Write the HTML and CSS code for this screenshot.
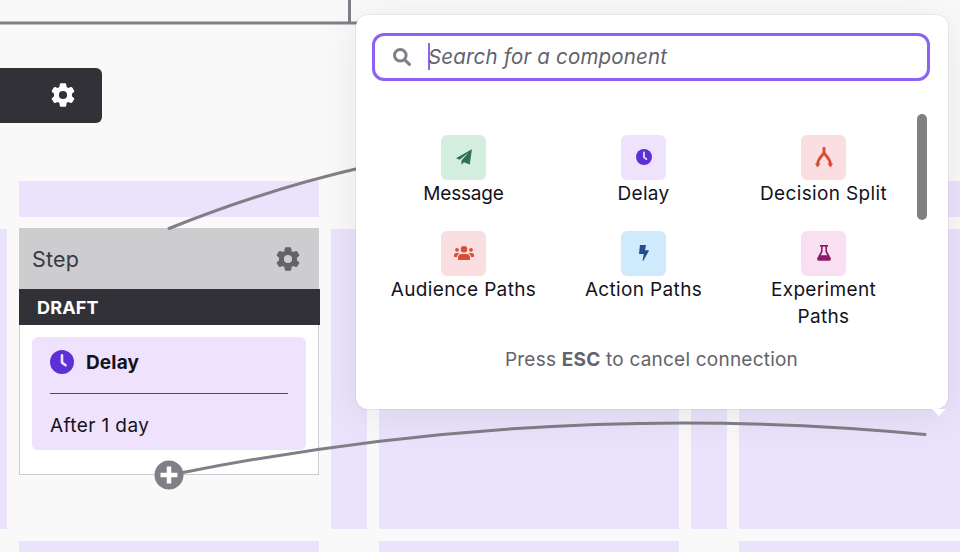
FILE: index.html
```html
<!DOCTYPE html>
<html lang="en">
<head>
<meta charset="utf-8">
<title>Canvas</title>
<link rel="stylesheet" href="styles.css">
</head>
<body>
<svg class="defs" width="0" height="0">
  <symbol id="gear" viewBox="0 0 24 24"><path fill-rule="evenodd" d="M8.8 1.200Q8.900 0.300 9.800 0.300H14.200Q15.100 0.300 15.200 1.200L15.600 3.900Q16.400 4.200 17.200 4.900L19.800 4.100Q20.800 3.800 21.400 4.800L23.200 7.800Q23.600 8.500 22.900 9.100L20.900 10.700Q21.100 12 20.900 13.300L22.900 14.900Q23.600 15.500 23.200 16.200L21.400 19.200Q20.800 20.200 19.800 19.900L17.200 19.100Q16.400 19.800 15.600 20.100L15.200 22.800Q15.100 23.700 14.200 23.700H9.800Q8.900 23.700 8.800 22.800L8.400 20.100Q7.600 19.800 6.800 19.100L4.200 19.900Q3.200 20.200 2.600 19.200L.8 16.200Q.4 15.500 1.100 14.900L3.100 13.300Q2.900 12 3.100 10.700L1.100 9.100Q.4 8.500 .8 7.800L2.600 4.800Q3.200 3.800 4.200 4.100L6.800 4.900Q7.600 4.200 8.400 3.900ZM12 7.900a4.100 4.100 0 1 0 0 8.200a4.100 4.100 0 0 0 0-8.200Z"/></symbol>
  <symbol id="clock" viewBox="0 0 24 24"><circle cx="12" cy="12" r="12"/><path class="hand" d="M12 5.200v7.400l3.600 2.600"/></symbol>
</svg>
<main class="canvas">
  <div class="zones">
    <div class="zone top c2"></div><div class="zone top c4"></div><div class="zone top c6"></div>
    <div class="zone mid c1"></div>
    <section class="card">
      <header class="card-head"><span>Step</span><svg class="gear"><use href="#gear"/></svg></header>
      <div class="status">DRAFT</div>
      <div class="card-body">
        <div class="component">
          <div class="component-title"><svg class="clock"><use href="#clock"/></svg><span>Delay</span></div>
          <hr>
          <div class="detail">After 1 day</div>
        </div>
      </div>
    </section>
    <div class="zone mid c3"></div><div class="zone mid c4"></div><div class="zone mid c5"></div><div class="zone mid c6"></div>
    <div class="zone low c2"></div><div class="zone low c4"></div><div class="zone low c6"></div>
  </div>
  <div class="node"><svg class="gear"><use href="#gear"/></svg></div>
  <svg class="links" viewBox="0 0 960 552">
    <path d="M0 23H360M349.500 0V23"/>
    <path d="M169 228.500Q268 189 362 167.500"/>
    <path d="M183 472.500Q554 399 925 434.500"/>
    <circle cx="169" cy="475" r="14.500"/>
    <path class="plus" d="M169 466.500v17M160.500 475h17"/>
  </svg>
  <aside class="popover">
    <div class="search">
      <svg viewBox="0 0 18 18"><circle cx="7.300" cy="7.300" r="5.800"/><path d="M11.600 11.600L16.400 16.400"/></svg>
      <span class="caret"></span><span class="placeholder">Search for a component</span>
    </div>
    <div class="results">
      <div class="options">
        <div class="option"><div class="tile green"><svg viewBox="0 0 16 16"><path d="M15.900 .2L0 9.200L3.700 10.700L12.600 3.500L5.500 11.600V15.800L8 13.200L13.800 15.400Z"/></svg></div><span>Message</span></div>
        <div class="option"><div class="tile violet"><svg><use href="#clock"/></svg></div><span>Delay</span></div>
        <div class="option"><div class="tile red"><svg class="split" viewBox="0 0 18 21"><path class="line" d="M9 0V6.500M9 5.500C8 9 3 10.500 2.700 17M9 5.500C10 9 15 10.500 15.300 17"/><path d="M0 16.500H5.500L2.500 20.500ZM12.500 16.500H18L15.500 20.500Z"/></svg></div><span>Decision Split</span></div>
        <div class="option"><div class="tile red"><svg class="people" viewBox="0 0 20 16"><circle cx="10" cy="4.200" r="3.300"/><circle cx="3" cy="4.800" r="1.900"/><circle cx="17" cy="4.800" r="1.900"/><path d="M4 15V12.500Q4 9 7.500 9H12.500Q16 9 16 12.500V15ZM0 12V10Q0 7.900 2.300 7.900H4Q5 7.900 5.300 8.300Q3.300 9.500 3 12ZM20 12V10Q20 7.900 17.700 7.900H16Q15 7.900 14.700 8.300Q16.700 9.500 17 12Z"/></svg></div><span>Audience Paths</span></div>
        <div class="option"><div class="tile blue"><svg class="bolt" viewBox="0 0 10 16"><path d="M1 0H7L6 5.200H9.600Q10 5.400 9.800 6L4.300 15.800H3.500L4.800 9H.3Q0 8.900 0 8.500Z"/></svg></div><span>Action Paths</span></div>
        <div class="option"><div class="tile pink"><svg class="flask" viewBox="0 0 14 16"><path fill-rule="evenodd" d="M3 0H11V1.800H10V6.200L13.700 13Q14.600 15.800 12.200 15.800H1.800Q-.6 15.800 .3 13L4 6.200V1.800H3ZM5.600 1.800V6.800L3.800 10.200H10.200L8.400 6.800V1.800Z"/></svg></div><span>Experiment Paths</span></div>
      </div>
      <div class="scrollbar"></div>
    </div>
    <p class="hint">Press <b>ESC</b> to cancel connection</p>
  </aside>
</main>
</body>
</html>
```
FILE: styles.css
```css
* { box-sizing: border-box; }
body { margin: 0; font-family: Inter, "Noto Sans", sans-serif; font-size: 19px; line-height: 27px; color: #14121c; }
.defs { position: absolute; }
.canvas { position: relative; width: 960px; height: 552px; overflow: hidden; background: #f9f9f9; }
.zones { display: grid; grid-template-columns: 7px 300px 36px 300px 36px 300px; grid-template-rows: 36px 300px 60px; gap: 12px; padding-top: 180.500px; }
.zone { background: #ebe3fc; }
.c1 { grid-column: 1; } .c2 { grid-column: 2; } .c3 { grid-column: 3; } .c4 { grid-column: 4; } .c5 { grid-column: 5; } .c6 { grid-column: 6; }
.top { grid-row: 1; } .mid { grid-row: 2; } .low { grid-row: 3; }
.node { position: absolute; left: -198px; top: 68px; width: 300px; height: 55px; border-radius: 6px; background: #333138; color: #fff; display: flex; align-items: center; justify-content: flex-end; padding: 0 27px 1px 0; }
.gear { width: 24px; height: 24px; fill: currentColor; }
.card { grid-column: 2; grid-row: 2; align-self: start; height: 247px; margin-top: -.5px; background: #fff; border: 1px solid #cdcccf; border-top: 0; }
.card-head { height: 61px; margin: 0 -1px; padding: 1px 19px 0 13px; background: #cdcccf; color: #3a393f; display: flex; align-items: center; justify-content: space-between; font-size: 21.500px; letter-spacing: .2px; }
.card-head .gear { color: #64626a; }
.status { height: 36px; margin: 0 -2px 0 -1px; padding-left: 18px; background: #333138; color: #fff; font-weight: 700; font-size: 18px; line-height: 37px; letter-spacing: .2px; }
.card-body { padding: 12px; }
.component { height: 113px; background: #efe2fc; border-radius: 6px; padding: 12px 18px; }
.component-title { display: flex; align-items: center; gap: 12px; font-weight: 700; letter-spacing: .15px; }
.clock { width: 24px; height: 24px; margin-top: -1px; }
.clock, .violet svg { fill: #5d2fd6; }
.hand { fill: none; stroke: #efe2fc; stroke-width: 2.600px; stroke-linecap: round; stroke-linejoin: round; }
.component hr { border: 0; height: 1px; background: #5d2fd6; margin: 17px 0 18px; }
.detail { letter-spacing: .4px; }
.links { position: absolute; inset: 0; width: 960px; height: 552px; fill: none; stroke: #807e87; stroke-width: 3px; stroke-linecap: round; }
.links circle { fill: #807e87; stroke: none; }
.links .plus { stroke: #fff; stroke-width: 4.500px; stroke-linecap: butt; }
.popover { position: absolute; left: 356px; top: 15px; width: 592px; height: 394px; padding: 18px 16px; background: #fff; border-radius: 12px; box-shadow: 0 0 0 1px rgba(0,0,0,.05), 0 6px 42px rgba(0,0,0,.08); }
.popover::after { content: ""; position: absolute; right: 2px; bottom: -7px; border: 7px solid transparent; border-top-color: #fff; border-bottom: 0; }
.search { width: 558px; height: 48px; border: 3px solid #8c62f5; border-radius: 12px; display: flex; align-items: center; padding-left: 18px; }
.search svg { width: 18px; height: 18px; fill: none; stroke: #807e87; stroke-width: 3px; stroke-linecap: round; }
.caret { width: 2px; height: 27px; margin-left: 17px; margin-top: -1px; background: #8c62f5; }
.placeholder { font-size: 20.500px; font-style: italic; letter-spacing: .18px; color: #64626a; margin-left: -2px; margin-top: -2px; }
.results { display: flex; height: 216px; margin-top: 33px; }
.options { display: grid; grid-template-columns: repeat(3, 180px); grid-template-rows: 72px auto; row-gap: 24px; padding-top: 21px; margin-left: 1.500px; align-content: start; }
.option { display: flex; flex-direction: column; align-items: center; text-align: center; padding: 0 15px; letter-spacing: .35px; }
.green + span { letter-spacing: -.2px; }
.tile { width: 45px; height: 45px; border-radius: 6px; display: flex; align-items: center; justify-content: center; }
.tile svg { width: 16px; height: 16px; margin-top: -1px; }
.green { background: #d3eddf; fill: #2e724c; }
.violet { background: #efe2fc; }
.red { background: #fadee0; fill: #d84d35; }
.blue { background: #cfeafc; fill: #264b91; }
.pink { background: #f9dff2; fill: #8e1c68; }
.tile .split { width: 18px; height: 21px; }
.split .line { fill: none; stroke: #d84d35; stroke-width: 2.800px; }
.tile .people { width: 20px; }
.tile .bolt { width: 10px; }
.tile .flask { width: 14px; }
.scrollbar { width: 10px; height: 106px; margin-left: 3.500px; border-radius: 5px; background: #808080; }
.hint { margin: 16px 0 0; padding-right: 1px; text-align: center; color: #64626a; letter-spacing: .22px; }
```
